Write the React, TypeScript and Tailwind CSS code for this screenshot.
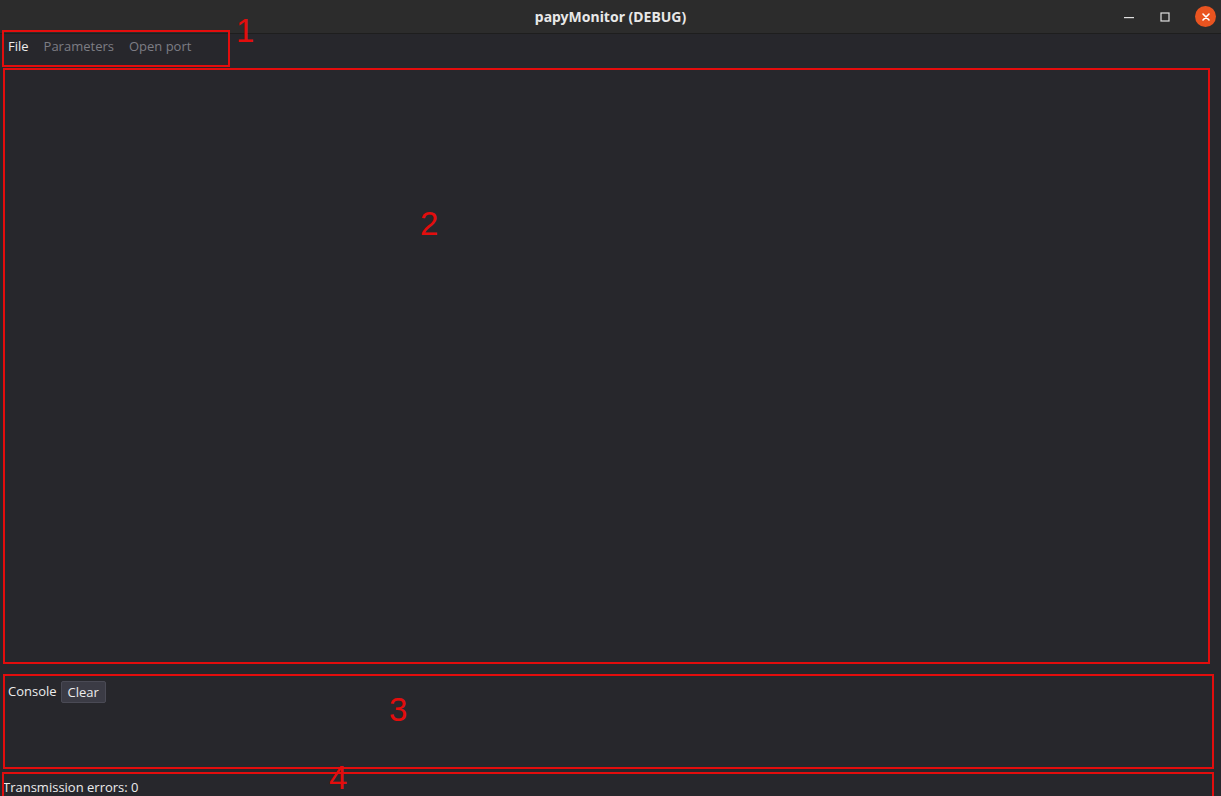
import React from 'react';

const UI_FONT = { fontFamily: '"Open Sans", "Noto Sans", sans-serif' };
const TITLE_FONT = { fontFamily: '"Noto Sans", "DejaVu Sans", sans-serif' };

// red annotation rectangles drawn over the screenshot
const MARKS = [
  { id: 'm1', cls: 'left-[2px] top-[30px] w-[228px] h-[37px]' },
  { id: 'm2', cls: 'left-[3px] top-[68px] w-[1207px] h-[596px]' },
  { id: 'm3', cls: 'left-[3px] top-[674px] w-[1211px] h-[95px]' },
  { id: 'm4', cls: 'left-[2px] top-[772px] w-[1212px] h-[26px]' },
];

const LABELS = [
  { text: '1', cls: 'left-[236px] top-[14px]' },
  { text: '2', cls: 'left-[420px] top-[207px]' },
  { text: '3', cls: 'left-[389px] top-[693px]' },
  { text: '4', cls: 'left-[329px] top-[761px]' },
];

function TitleBar() {
  return (
    <div className="relative h-[34px] shrink-0 bg-[#2c2c2c] border-b border-[#1e1e1e] flex items-center justify-center">
      <span className="text-[14px] font-bold text-[#e8e8e8]" style={TITLE_FONT}>
        papyMonitor (DEBUG)
      </span>
      <div className="absolute right-[5px] top-0 h-full flex items-center gap-[24px]">
        <svg width="12" height="12" viewBox="0 0 12 12">
          <rect x="1" y="6" width="10" height="1.2" fill="#e0e0e0" />
        </svg>
        <svg width="12" height="12" viewBox="0 0 12 12">
          <rect x="2" y="2" width="8" height="8" fill="none" stroke="#e0e0e0" strokeWidth="1.2" />
        </svg>
        <div className="w-[21px] h-[21px] rounded-full bg-[#e95420] flex items-center justify-center">
          <svg width="10" height="10" viewBox="0 0 10 10">
            <path d="M2 2 L8 8 M8 2 L2 8" stroke="#ffffff" strokeWidth="1.6" strokeLinecap="round" />
          </svg>
        </div>
      </div>
    </div>
  );
}

export default function App() {
  return (
    <div className="relative w-[1221px] h-[796px] overflow-hidden bg-[#27272c] flex flex-col" style={UI_FONT}>
      <TitleBar />

      {/* Menu bar */}
      <div className="h-[24px] shrink-0 flex items-center gap-[15px] pl-[8px] pt-[2px] text-[13px]">
        <span className="text-[#ececec]">File</span>
        <span className="text-[#7d7d84]">Parameters</span>
        <span className="text-[#7d7d84]">Open port</span>
      </div>

      {/* Plot area */}
      <div className="flex-1" />

      {/* Console */}
      <div className="h-[108px] shrink-0 pt-[17px] pl-[8px] flex flex-col">
        <div className="flex items-center gap-[4px] text-[13px] text-[#ececec]">
          <span>Console</span>
          <button className="h-[22px] px-[6px] rounded-[2px] bg-[#3b3b45] border border-[#4a4a55] text-[#ececec] leading-none">
            Clear
          </button>
        </div>
      </div>

      {/* Status */}
      <div className="h-[24px] shrink-0 flex items-center pl-[3px] pt-[7px] text-[13px] text-[#ececec]">
        Transmission errors: 0
      </div>

      {MARKS.map((m) => (
        <div key={m.id} className={`absolute border-2 border-[#e30d0d] pointer-events-none ${m.cls}`} />
      ))}
      {LABELS.map((l) => (
        <span
          key={l.text}
          className={`absolute text-[33px] leading-none text-[#e30d0d] ${l.cls}`}
          style={{ fontFamily: '"Liberation Sans", sans-serif' }}
        >
          {l.text}
        </span>
      ))}
    </div>
  );
}
